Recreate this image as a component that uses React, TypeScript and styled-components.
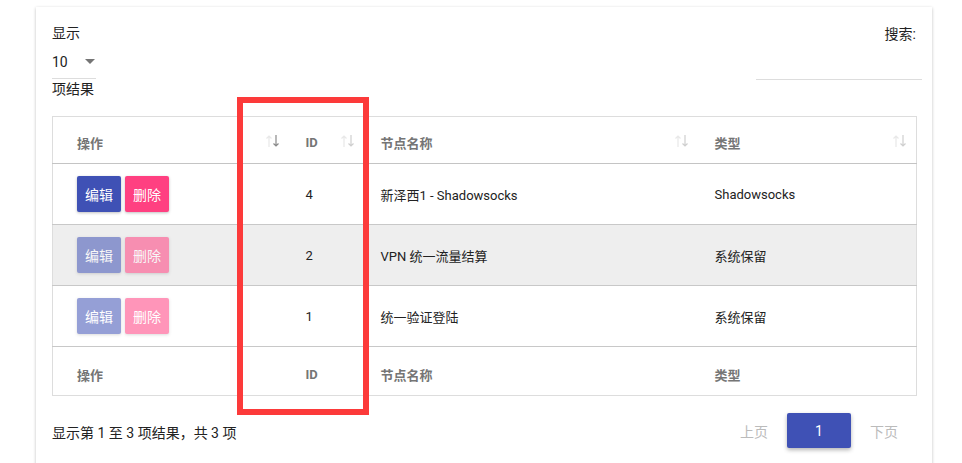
import * as React from "react";
import styled, { createGlobalStyle } from "styled-components";

const GlobalStyle = createGlobalStyle`
  html, body {
    margin: 0;
    padding: 0;
    background: #fff;
  }
  body {
    font-family: Roboto, "Noto Sans CJK SC", "Liberation Sans", sans-serif;
    color: #222;
  }
`;

interface Node {
  id: number;
  name: string;
  type: string;
  enabled: boolean;
}

const nodes: Node[] = [
  { id: 4, name: "新泽西1 - Shadowsocks", type: "Shadowsocks", enabled: true },
  { id: 2, name: "VPN 统一流量结算", type: "系统保留", enabled: false },
  { id: 1, name: "统一验证登陆", type: "系统保留", enabled: false },
];

const headers = ["操作", "ID", "节点名称", "类型"];

const SortIcon = (props: { active?: boolean }) => (
  <SortSvg width="15" height="14" viewBox="0 0 15 14">
    <g fill="none" strokeWidth="1.2">
      <path d="M4 13V2 M1.5 4.5L4 2l2.5 2.5" stroke="#e8e8e8" />
      <path
        d="M11 1v11 M8.5 9.5L11 12l2.5-2.5"
        stroke={props.active ? "#8a8a8a" : "#cfcfcf"}
      />
    </g>
  </SortSvg>
);

const App = () => {
  return (
    <Page>
      <GlobalStyle />
      <Card>
        <TopBar>
          <LengthBox>
            <Label>显示</Label>
            <Select>
              <span>10</span>
              <Caret />
            </Select>
            <Label>项结果</Label>
          </LengthBox>
          <SearchBox>
            <Label>搜索:</Label>
            <SearchInput />
          </SearchBox>
        </TopBar>

        <Table>
          <colgroup>
            <col style={{ width: 236 }} />
            <col style={{ width: 75 }} />
            <col style={{ width: 334 }} />
            <col style={{ width: 219 }} />
          </colgroup>
          <thead>
            <tr>
              {headers.map((h, i) => (
                <Th key={h} first={i === 0}>
                  {h}
                  <SortSlot>
                    <SortIcon active={i === 0} />
                  </SortSlot>
                </Th>
              ))}
            </tr>
          </thead>
          <tbody>
            {nodes.map((n, ridx) => (
              <Tr key={n.id} striped={ridx % 2 === 1}>
                <Td first>
                  <Actions faded={!n.enabled}>
                    <Button color="#3f51b5">编辑</Button>
                    <Button color="#ff4081">删除</Button>
                  </Actions>
                </Td>
                <Td>{n.id}</Td>
                <Td>{n.name}</Td>
                <Td>{n.type}</Td>
              </Tr>
            ))}
          </tbody>
          <tfoot>
            <tr>
              {headers.map((h, i) => (
                <Tf key={h} first={i === 0}>
                  {h}
                </Tf>
              ))}
            </tr>
          </tfoot>
        </Table>

        <Bottom>
          <Info>显示第 1 至 3 项结果，共 3 项</Info>
          <Pager>
            <PageBtn>上页</PageBtn>
            <PageBtn current>1</PageBtn>
            <PageBtn>下页</PageBtn>
          </Pager>
        </Bottom>
      </Card>
      <Highlight />
    </Page>
  );
};

const Page = styled.div`
  position: relative;
  padding: 7px 30px 0 36px;
  height: 463px;
  box-sizing: border-box;
  overflow: hidden;
`;

const Card = styled.div`
  width: 896px;
  min-height: 480px;
  box-sizing: border-box;
  background: #fff;
  padding: 16px 16px 0 16px;
  box-shadow: 0 1px 3px rgba(0, 0, 0, 0.25);
`;

const TopBar = styled.div`
  display: flex;
  justify-content: space-between;
  align-items: flex-start;
`;

const LengthBox = styled.div`
  display: flex;
  flex-direction: column;
  align-items: flex-start;
`;

const Label = styled.div`
  font-size: 14px;
  line-height: 20px;
  color: #222;
`;

const Select = styled.div`
  display: flex;
  align-items: center;
  justify-content: space-between;
  width: 44px;
  height: 36px;
  box-sizing: border-box;
  padding-top: 2px;
  border-bottom: 1px solid #ddd;
  font-size: 14px;
  color: #222;
`;

const Caret = styled.span`
  width: 0;
  height: 0;
  margin-right: 1px;
  border-left: 5px solid transparent;
  border-right: 5px solid transparent;
  border-top: 5px solid #757575;
`;

const SearchBox = styled.div`
  display: flex;
  flex-direction: column;
  align-items: flex-end;
  margin-right: -6px;
  padding-top: 1px;
  & > div:first-child {
    margin-right: 6px;
  }
`;

const SearchInput = styled.div`
  width: 166px;
  height: 35px;
  border-bottom: 1px solid #ddd;
`;

const Table = styled.table`
  margin-top: 17px;
  width: 864px;
  table-layout: fixed;
  border-collapse: collapse;
  border: 1px solid #ddd;
  font-size: 13px;
`;

const Th = styled.th<{ first?: boolean }>`
  position: relative;
  height: 47px;
  box-sizing: border-box;
  padding: 5px 0 0 ${(p) => (p.first ? 24 : 17)}px;
  text-align: left;
  font-weight: bold;
  color: #757575;
  border-bottom: 1px solid #c4c4c4;
`;

const SortSlot = styled.span`
  position: absolute;
  right: 9px;
  top: 17px;
  display: flex;
`;

const SortSvg = styled.svg`
  display: block;
`;

const Tr = styled.tr<{ striped?: boolean }>`
  background: ${(p) => (p.striped ? "#eee" : "#fff")};
  border-bottom: 1px solid #c8c8c8;
`;

const Td = styled.td<{ first?: boolean }>`
  height: 60px;
  padding: 0 0 0 ${(p) => (p.first ? 24 : 17)}px;
  vertical-align: middle;
  color: #222;
`;

const Tf = styled.td<{ first?: boolean }>`
  height: 49px;
  box-sizing: border-box;
  padding: 6px 0 0 ${(p) => (p.first ? 24 : 17)}px;
  font-weight: bold;
  color: #757575;
`;

const Actions = styled.div<{ faded?: boolean }>`
  display: flex;
  gap: 4px;
  opacity: ${(p) => (p.faded ? 0.55 : 1)};
`;

const Button = styled.button<{ color: string }>`
  width: 44px;
  height: 36px;
  padding: 0;
  border: 0;
  border-radius: 2px;
  background: ${(p) => p.color};
  color: #fff;
  font-family: inherit;
  font-size: 14px;
  box-shadow: 0 1px 3px rgba(0, 0, 0, 0.25);
`;

const Bottom = styled.div`
  display: flex;
  justify-content: space-between;
  align-items: center;
  margin-top: 17px;
`;

const Info = styled.div`
  font-size: 14px;
  color: #222;
  padding-top: 2px;
`;

const Pager = styled.div`
  display: flex;
  gap: 1px;
`;

const PageBtn = styled.div<{ current?: boolean }>`
  width: 64px;
  height: 35px;
  display: flex;
  align-items: center;
  justify-content: center;
  border-radius: 2px;
  font-size: 14px;
  color: ${(p) => (p.current ? "#fff" : "#bbb")};
  background: ${(p) => (p.current ? "#3f51b5" : "transparent")};
  box-shadow: ${(p) => (p.current ? "0 2px 4px rgba(0,0,0,0.3)" : "none")};
`;

const Highlight = styled.div`
  position: absolute;
  left: 237px;
  top: 97px;
  width: 132px;
  height: 318px;
  box-sizing: border-box;
  border: 6px solid #fc3a3a;
  pointer-events: none;
`;

export default App;
